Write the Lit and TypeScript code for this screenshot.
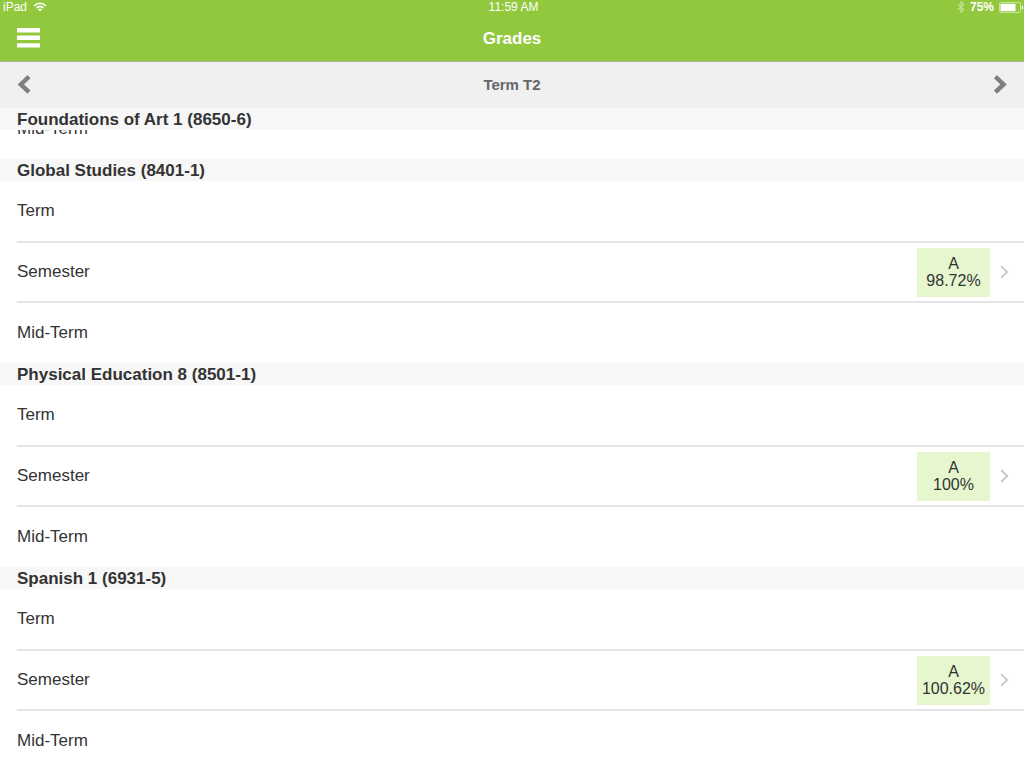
import { LitElement, html, css, svg } from "lit";
import { customElement, property } from "lit/decorators.js";

interface Grade {
  letter: string;
  percent: string;
}

interface Course {
  name: string;
  semester: Grade;
}

const courses: Course[] = [
  { name: "Global Studies (8401-1)", semester: { letter: "A", percent: "98.72%" } },
  { name: "Physical Education 8 (8501-1)", semester: { letter: "A", percent: "100%" } },
  { name: "Spanish 1 (6931-5)", semester: { letter: "A", percent: "100.62%" } },
];

const wifiIcon = svg`
  <svg width="14" height="10" viewBox="0 0 14 10" fill="none" stroke="#fff" stroke-width="1.6" aria-hidden="true">
    <path d="M1.2 4C4.6 .4 9.4 .4 12.8 4" />
    <path d="M3.4 6.2C5.6 4 8.4 4 10.6 6.2" />
    <path d="M7 9.6L5 7.5C6.2 6.5 7.8 6.5 9 7.5Z" fill="#fff" stroke="none" />
  </svg>`;

const bluetoothIcon = svg`
  <svg width="8" height="12" viewBox="0 0 8 12" fill="none" stroke="#c4e293" stroke-width="1.2" aria-hidden="true">
    <path d="M1 3.3L6.8 8.7L4 11.3V.7L6.8 3.3L1 8.7" />
  </svg>`;

const batteryIcon = svg`
  <svg width="25" height="11" viewBox="0 0 25 11" aria-hidden="true">
    <rect x=".5" y=".5" width="21" height="10" rx="1.5" fill="none" stroke="#c8e59b" />
    <rect x="1.5" y="1.8" width="15" height="7.4" fill="#fff" />
    <path d="M22.8 3.4C24.6 4 24.6 7 22.8 7.6Z" fill="#fff" />
  </svg>`;

@customElement("status-bar")
class StatusBar extends LitElement {
  static styles = css`
    :host {
      display: grid;
      grid-template-columns: 1fr auto 1fr;
      align-items: center;
      height: 14px;
      padding: 0 0 0 3px;
      font-size: 12px;
      line-height: 14px;
    }
    .side {
      display: flex;
      align-items: center;
      gap: 6px;
    }
    .end {
      justify-content: flex-end;
      gap: 5px;
    }
    .battery {
      font-weight: bold;
    }
    svg {
      display: block;
    }
  `;

  render() {
    return html`
      <div class="side"><span>iPad</span>${wifiIcon}</div>
      <span>11:59 AM</span>
      <div class="side end">${bluetoothIcon}<span class="battery">75%</span>${batteryIcon}</div>
    `;
  }
}

@customElement("grade-row")
class GradeRow extends LitElement {
  @property() label = "";
  @property({ attribute: false }) grade?: Grade;

  static styles = css`
    :host {
      display: block;
      padding-left: 17px;
      font-size: 17px;
      line-height: 20px;
    }
    .row {
      display: flex;
      align-items: center;
      justify-content: space-between;
      height: 60px;
      color: #333;
      text-decoration: none;
    }
    .graded {
      height: 58px;
      padding-right: 15px;
      border: solid #e4e4e9;
      border-width: 2px 0;
    }
    .detail {
      display: flex;
      align-items: center;
      gap: 10px;
    }
    .badge {
      display: flex;
      flex-direction: column;
      justify-content: center;
      width: 73px;
      height: 49px;
      background: #e6f6cf;
      font-size: 16px;
      line-height: 17px;
      text-align: center;
    }
  `;

  render() {
    if (!this.grade) {
      return html`<div class="row"><span>${this.label}</span></div>`;
    }
    return html`
      <a class="row graded" href="#">
        <span>${this.label}</span>
        <span class="detail">
          <span class="badge"><span>${this.grade.letter}</span><span>${this.grade.percent}</span></span>
          <svg width="9" height="14" viewBox="0 0 9 14" fill="none" stroke="#c9c9ce" stroke-width="2" aria-hidden="true">
            <path d="M1.2 1.2L7.2 7L1.2 12.8" />
          </svg>
        </span>
      </a>
    `;
  }
}

@customElement("app-root")
class AppRoot extends LitElement {
  static styles = css`
    :host {
      display: block;
      min-height: 100vh;
      overflow: hidden;
      background: #fff;
      color: #333;
      font-family: "Liberation Sans", Arial, sans-serif;
    }
    .top {
      background: #92c83e;
      border-bottom: 1px solid #a9b598;
      color: #fff;
    }
    .bar {
      display: grid;
      grid-template-columns: 1fr auto 1fr;
      align-items: center;
      padding: 0 17px;
    }
    .title {
      height: 47px;
    }
    .term {
      height: 46px;
      background: #f0f0f0;
      color: #666;
    }
    h1,
    h2,
    h3 {
      margin: 0;
      font-weight: bold;
    }
    h1 {
      padding-top: 2px;
      font-size: 17px;
      line-height: 20px;
    }
    h2 {
      font-size: 15px;
      line-height: 20px;
    }
    h3 {
      padding: 2px 17px 0;
      background: #f7f7f7;
      font-size: 17px;
      line-height: 20px;
    }
    button {
      justify-self: start;
      padding: 0;
      border: 0;
      background: none;
      cursor: pointer;
    }
    .next {
      grid-column: 3;
      justify-self: end;
    }
    svg {
      display: block;
    }
    .tail {
      display: flex;
      align-items: flex-end;
      height: 29px;
      overflow: hidden;
    }
  `;

  render() {
    return html`
      <header class="top">
        <status-bar></status-bar>
        <div class="bar title">
          <button type="button" aria-label="Menu">
            <svg width="23" height="20" viewBox="0 0 23 20" fill="#fff" aria-hidden="true">
              <rect width="23" height="4.4" rx=".6" />
              <rect y="7.6" width="23" height="4.4" rx=".6" />
              <rect y="15.2" width="23" height="4.4" rx=".6" />
            </svg>
          </button>
          <h1>Grades</h1>
        </div>
      </header>
      <nav class="bar term" aria-label="Term">
        <button type="button" aria-label="Previous term">
          <svg width="15" height="20" viewBox="0 0 15 20" fill="none" stroke="#808080" stroke-width="4.4" aria-hidden="true">
            <path d="M12 1.6L3.8 9.4L12 17.2" />
          </svg>
        </button>
        <h2>Term T2</h2>
        <button class="next" type="button" aria-label="Next term">
          <svg width="15" height="20" viewBox="0 0 15 20" fill="none" stroke="#808080" stroke-width="4.4" aria-hidden="true">
            <path d="M3.4 1.6L11.6 9.4L3.4 17.2" />
          </svg>
        </button>
      </nav>
      <main>
        <section>
          <h3>Foundations of Art 1 (8650-6)</h3>
          <div class="tail"><grade-row label="Mid-Term"></grade-row></div>
        </section>
        ${courses.map(
          (course) => html`
            <section>
              <h3>${course.name}</h3>
              <grade-row label="Term"></grade-row>
              <grade-row label="Semester" .grade=${course.semester}></grade-row>
              <grade-row label="Mid-Term"></grade-row>
            </section>
          `
        )}
      </main>
    `;
  }
}
